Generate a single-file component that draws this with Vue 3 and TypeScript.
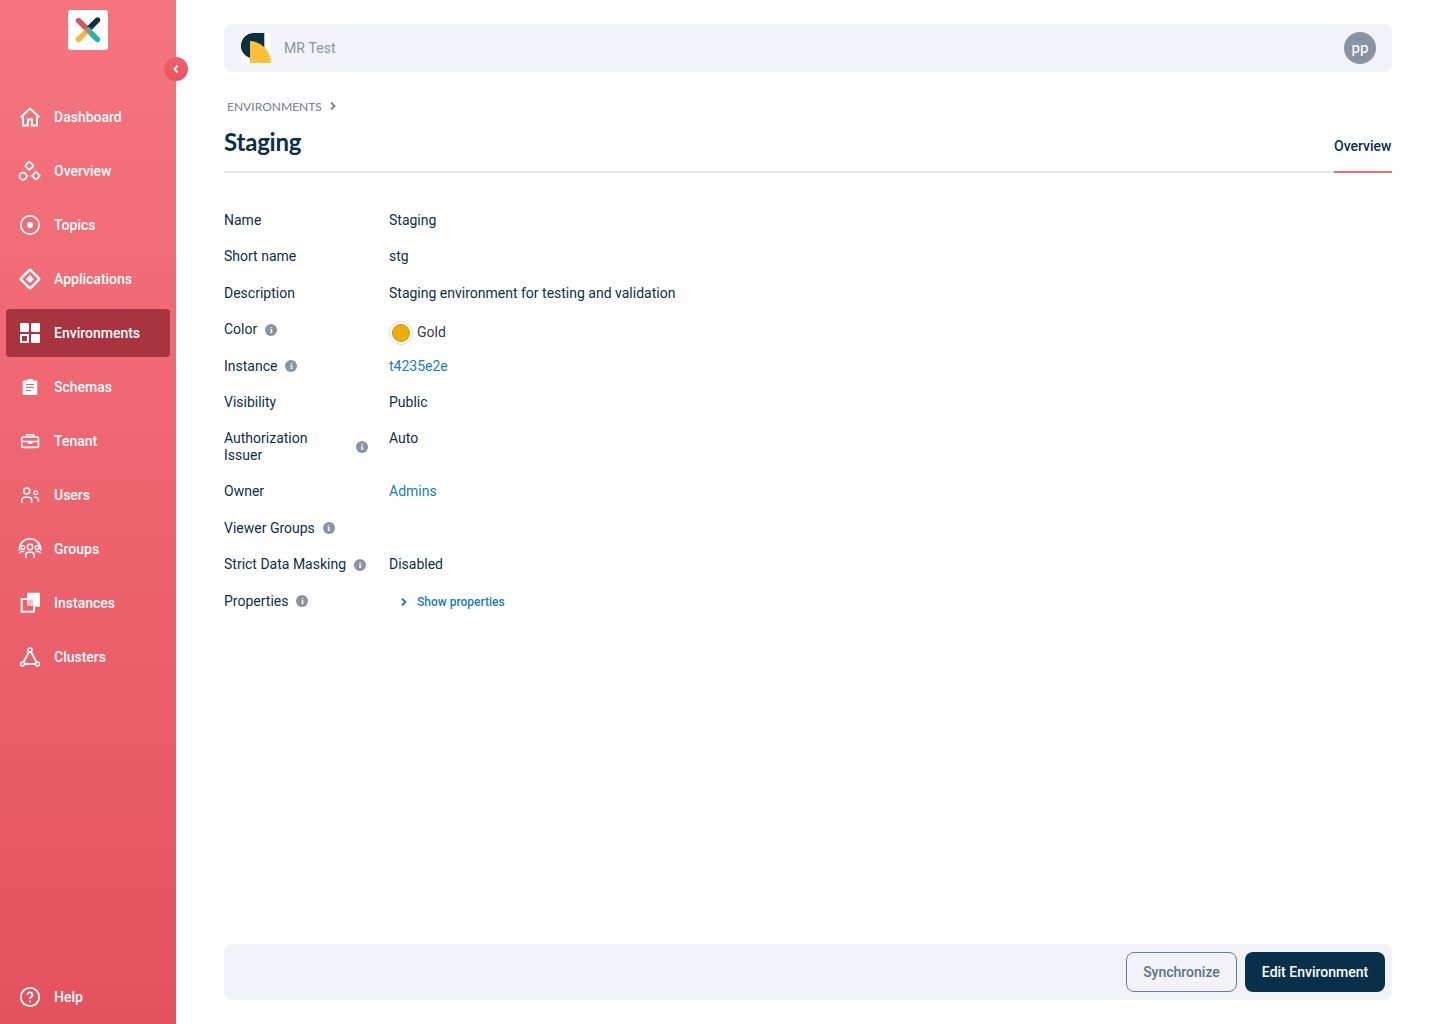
<script setup lang="ts">
interface NavItem { label: string; icon: string; active?: boolean }
const nav: NavItem[] = [
  { label: 'Dashboard', icon: 'home' },
  { label: 'Overview', icon: 'overview' },
  { label: 'Topics', icon: 'topics' },
  { label: 'Applications', icon: 'apps' },
  { label: 'Environments', icon: 'envs', active: true },
  { label: 'Schemas', icon: 'schemas' },
  { label: 'Tenant', icon: 'tenant' },
  { label: 'Users', icon: 'users' },
  { label: 'Groups', icon: 'groups' },
  { label: 'Instances', icon: 'instances' },
  { label: 'Clusters', icon: 'clusters' },
]
</script>

<template>
  <div class="page">
    <aside class="sidebar">
      <div class="logo">
        <svg width="40" height="40" viewBox="0 0 40 40">
          <path d="M10.5 10.5 L19 19" stroke="#d9545f" stroke-width="5.4" stroke-linecap="round" />
          <path d="M29.5 10 L21 18.5" stroke="#0a3048" stroke-width="5.4" stroke-linecap="round" />
          <path d="M29.5 29.5 L21 21" stroke="#20b5a5" stroke-width="5.4" stroke-linecap="round" />
          <path d="M10.5 29.5 L19 21" stroke="#f5b942" stroke-width="5.4" stroke-linecap="round" />
          <circle cx="20" cy="20" r="3" fill="#9a9088" />
        </svg>
      </div>
      <button class="collapse" type="button" aria-label="Collapse">
        <svg width="10" height="12" viewBox="0 0 10 12"><path d="M6.6 2.6 L3.6 6 L6.6 9.4" fill="none" stroke="#fff" stroke-width="2" /></svg>
      </button>
      <nav class="nav">
        <a v-for="item in nav" :key="item.label" class="nav-item" :class="{ active: item.active }">
          <svg class="nav-icon" width="24" height="24" viewBox="0 0 24 24" fill="none" stroke="#fff" stroke-width="1.7">
            <template v-if="item.icon === 'home'">
              <path d="M2.7 12.2 L12 3.6 L21.3 12.2 M5 10.5 V20.5 H10 V14.5 H14 V20.5 H19 V10.5" stroke-width="2" />
            </template>
            <template v-else-if="item.icon === 'overview'">
              <rect x="8.3" y="3.7" width="6" height="6" rx="0.5" transform="rotate(45 11.3 6.7)" />
              <circle cx="5" cy="17.2" r="3.5" />
              <rect x="15.2" y="13.9" width="5.6" height="5.6" rx="0.5" transform="rotate(45 18 16.7)" />
              <path d="M9 17 H14 M14.5 8 L16.5 12" stroke-width="0.7" stroke-dasharray="1.5 1" />
            </template>
            <template v-else-if="item.icon === 'topics'">
              <circle cx="12" cy="12" r="9.2" />
              <circle cx="12" cy="12" r="3" fill="#fff" stroke="none" />
            </template>
            <template v-else-if="item.icon === 'apps'">
              <rect x="5.2" y="5.2" width="13.6" height="13.6" rx="1" transform="rotate(45 12 12)" stroke-width="2.4" />
              <rect x="9.2" y="9.2" width="5.6" height="5.6" transform="rotate(45 12 12)" fill="#fff" stroke="none" />
            </template>
            <template v-else-if="item.icon === 'envs'">
              <rect x="2" y="2" width="9" height="9" rx="1.2" fill="#fff" stroke="none" />
              <rect x="13" y="2" width="9" height="9" rx="1.2" fill="#fff" stroke="none" />
              <rect x="3" y="14" width="7" height="7" stroke-width="2" />
              <rect x="13" y="13" width="9" height="9" rx="1.2" fill="#fff" stroke="none" />
            </template>
            <template v-else-if="item.icon === 'schemas'">
              <path d="M9.2 5.5 V5 A1 1 0 0 1 10.2 4 H13.8 A1 1 0 0 1 14.8 5 V5.5 H18 A1.3 1.3 0 0 1 19.3 6.8 V18.7 A1.3 1.3 0 0 1 18 20 H6 A1.3 1.3 0 0 1 4.7 18.7 V6.8 A1.3 1.3 0 0 1 6 5.5 Z" fill="#fff" stroke="none" />
              <path d="M8 9.5 H16 M8 12.5 H16 M8 15.5 H13" stroke="#f0686f" stroke-width="1.2" />
            </template>
            <template v-else-if="item.icon === 'tenant'">
              <rect x="3.7" y="8" width="16.8" height="10.4" rx="1.5" stroke-width="1.6" />
              <path d="M8.5 8 V5.8 H15.7 V8 M3.7 12.5 H20.5 M10.5 12.5 V14 H13.7 V12.5" stroke-width="1.6" />
            </template>
            <template v-else-if="item.icon === 'users'">
              <circle cx="8.7" cy="8" r="3" stroke-width="1.5" />
              <circle cx="17.7" cy="9.7" r="1.9" stroke-width="1.2" />
              <path d="M3.7 20 V17.5 A3.2 3.2 0 0 1 6.9 14.3 H10.5 A3.2 3.2 0 0 1 13.7 17.5 V20 M16 14.3 H17.5 A3 3 0 0 1 20.5 17.3 V18.7" stroke-width="1.5" />
            </template>
            <template v-else-if="item.icon === 'groups'">
              <path d="M1.3 13.5 V12.5 A10.7 10.7 0 0 1 22.7 12.5 V13.5" stroke-width="1.6" />
              <circle cx="12" cy="10" r="2.7" stroke-width="1.5" />
              <circle cx="4.8" cy="10.5" r="1.9" stroke-width="1.3" />
              <circle cx="19.2" cy="10.5" r="1.9" stroke-width="1.3" />
              <path d="M7.8 21 V18 A2.8 2.8 0 0 1 10.6 15.2 H13.4 A2.8 2.8 0 0 1 16.2 18 V21 M1.5 16.5 A2.5 2.5 0 0 1 4 14.5 H6.5 M22.5 16.5 A2.5 2.5 0 0 0 20 14.5 H17.5" stroke-width="1.5" />
            </template>
            <template v-else-if="item.icon === 'instances'">
              <path d="M9 1.7 H22 V15.7 H17 V7 H9 Z" fill="#fff" stroke="none" />
              <rect x="3.7" y="8" width="12.3" height="12.7" stroke-width="2" />
              <rect x="9" y="9" width="6" height="6" fill="#fff" fill-opacity=".6" stroke="none" />
            </template>
            <template v-else-if="item.icon === 'clusters'">
              <path d="M12 5 L4.5 19 H19.5 Z" stroke-width="2" />
              <circle cx="12" cy="5" r="2" fill="#f0686f" stroke-width="1.6" />
              <circle cx="4.5" cy="19" r="2" fill="#f0686f" stroke-width="1.6" />
              <circle cx="19.5" cy="19" r="2" fill="#f0686f" stroke-width="1.6" />
            </template>
          </svg>
          <span>{{ item.label }}</span>
        </a>
      </nav>
      <a class="nav-item help">
        <svg class="nav-icon" width="24" height="24" viewBox="0 0 24 24" fill="none" stroke="#fff">
          <circle cx="12" cy="12" r="9.2" stroke-width="1.8" />
          <path d="M9.6 9.8 A2.4 2.4 0 1 1 13 12 C12.2 12.5 12 13 12 14" stroke-width="1.8" />
          <circle cx="12" cy="16.6" r="1.1" fill="#fff" stroke="none" />
        </svg>
        <span>Help</span>
      </a>
    </aside>

    <main class="main">
      <header class="topbar">
        <div class="org-logo">
          <svg width="30" height="30" viewBox="0 0 30 30">
            <rect width="30" height="30" rx="2" fill="#fff" />
            <path d="M23.3 0 H12.7 A12.7 12.7 0 0 0 9 24.9 V16 H23.3 Z" fill="#0a3048" />
            <path d="M9 8 C21 8 30 19 30 30 H9 Z" fill="#fcbf36" />
          </svg>
        </div>
        <span class="org-name">MR Test</span>
        <span class="avatar">pp</span>
      </header>

      <div class="breadcrumb">
        <span>ENVIRONMENTS</span>
        <svg width="8" height="10" viewBox="0 0 8 10"><path d="M2 1.5 L5.5 5 L2 8.5" fill="none" stroke="#7d8896" stroke-width="2" /></svg>
      </div>

      <div class="title-row">
        <h1>Staging</h1>
        <div class="tab">Overview</div>
      </div>

      <dl class="details">
        <dt>Name</dt><dd>Staging</dd>
        <dt>Short name</dt><dd>stg</dd>
        <dt>Description</dt><dd>Staging environment for testing and validation</dd>
        <dt>Color<i class="info">i</i></dt>
        <dd class="color"><span class="swatch"><span class="dot"></span></span>Gold</dd>
        <dt>Instance<i class="info">i</i></dt><dd class="link">t4235e2e</dd>
        <dt>Visibility</dt><dd>Public</dd>
        <dt class="two-line"><span>Authorization Issuer</span><i class="info">i</i></dt><dd>Auto</dd>
        <dt>Owner</dt><dd class="link">Admins</dd>
        <dt>Viewer Groups<i class="info">i</i></dt><dd></dd>
        <dt>Strict Data Masking<i class="info">i</i></dt><dd>Disabled</dd>
        <dt>Properties<i class="info">i</i></dt>
        <dd class="props">
          <svg width="8" height="10" viewBox="0 0 8 10"><path d="M2 1.6 L5.4 5 L2 8.4" fill="none" stroke="#1a7db8" stroke-width="2" /></svg>
          <span>Show properties</span>
        </dd>
      </dl>

      <footer class="footer">
        <button class="btn ghost" type="button">Synchronize</button>
        <button class="btn solid" type="button">Edit Environment</button>
      </footer>
    </main>
  </div>
</template>

<style scoped>
.page {
  display: flex;
  height: 1024px;
  font-family: Roboto, "Liberation Sans", sans-serif;
  color: #0a3048;
  background: #fff;
  overflow: hidden;
}
.sidebar {
  position: relative;
  flex: 0 0 176px;
  display: flex;
  flex-direction: column;
  padding: 10px 6px 3px;
  box-sizing: border-box;
  background: linear-gradient(180deg, #f5757f 0%, #e4525e 100%);
}
.logo {
  align-self: center;
  width: 40px;
  height: 40px;
  background: #fff;
  border-radius: 3px;
}
.collapse {
  position: absolute;
  left: 164px;
  top: 57px;
  width: 24px;
  height: 24px;
  padding: 0;
  border: 0;
  border-radius: 50%;
  background: linear-gradient(180deg, #ee646d, #e7535f);
  display: flex;
  align-items: center;
  justify-content: center;
}
.nav {
  display: flex;
  flex-direction: column;
  gap: 6px;
  margin-top: 43px;
  flex: 1;
}
.nav-item {
  display: flex;
  align-items: center;
  height: 48px;
  padding-left: 12px;
  gap: 12px;
  border-radius: 4px;
  color: #fff;
  font-size: 14px;
  font-weight: 500;
}
.nav-item.active {
  background: #a8343f;
}
.nav-icon {
  flex: none;
}
.main {
  flex: 1;
  min-width: 0;
  display: flex;
  flex-direction: column;
  padding: 24px 48px;
}
.topbar {
  display: flex;
  align-items: center;
  height: 48px;
  padding: 0 16px 0 17px;
  background: #f1f3f8;
  border-radius: 8px;
}
.org-logo {
  width: 30px;
  height: 30px;
}
.org-logo svg {
  display: block;
}
.org-name {
  margin-left: 13px;
  font-size: 14px;
  color: #8a93a5;
  letter-spacing: 0.12px;
}
.avatar {
  margin-left: auto;
  width: 32px;
  height: 32px;
  padding-bottom: 2px;
  box-sizing: border-box;
  border-radius: 50%;
  background: #8a93a5;
  color: #fff;
  font-family: Lato, sans-serif;
  font-size: 15px;
  font-weight: 500;
  display: flex;
  align-items: center;
  justify-content: center;
}
.breadcrumb {
  display: flex;
  align-items: center;
  gap: 7px;
  margin-top: 26px;
  padding-left: 3px;
  height: 16px;
  font-family: Lato, sans-serif;
  font-size: 12px;
  font-weight: 500;
  color: #7d8896;
}
.title-row {
  display: flex;
  justify-content: space-between;
  align-items: stretch;
  height: 48px;
  margin-top: 11px;
  border-bottom: 2px solid #e6e6f2;
  box-sizing: border-box;
}
h1 {
  margin: 2px 0 0;
  font-family: Lato, sans-serif;
  font-size: 24px;
  font-weight: 700;
  line-height: 30px;
  letter-spacing: -0.2px;
  color: #0a3048;
}
.tab {
  align-self: flex-end;
  height: 36px;
  margin-bottom: -2px;
  border-bottom: 2px solid #f06a78;
  font-size: 14px;
  font-weight: 500;
  line-height: 18px;
  box-sizing: border-box;
  width: 58px;
  white-space: nowrap;
}
.details {
  display: grid;
  grid-template-columns: 144px 1fr;
  column-gap: 21px;
  row-gap: 19.4px;
  margin: 39px 0 0;
  font-size: 14px;
  line-height: 17px;
}
dt {
  display: flex;
  align-items: center;
  gap: 8px;
}
.two-line {
  line-height: 16.8px;
}
dd {
  margin: 0;
}
.info {
  flex: none;
  width: 12px;
  height: 12px;
  border-radius: 50%;
  background: #8a93a5;
  color: #fff;
  font-family: "Liberation Serif", serif;
  font-style: normal;
  font-weight: 700;
  font-size: 9px;
  line-height: 12px;
  text-align: center;
}
.color {
  display: flex;
  align-items: center;
  gap: 4px;
  height: 17px;
  margin-top: 3px;
  margin-bottom: -3px;
  color: #333c46;
}
.swatch {
  flex: none;
  width: 24px;
  height: 24px;
  margin-top: 1px;
  box-sizing: border-box;
  border: 1px solid #d8dbe2;
  border-radius: 50%;
  display: flex;
  align-items: center;
  justify-content: center;
}
.dot {
  width: 18px;
  height: 18px;
  box-sizing: border-box;
  border-radius: 50%;
  background: #ecaf07;
  border: 1px solid #c8940a;
}
.link {
  color: #1a7db8;
}
.props {
  display: flex;
  align-items: center;
  padding-left: 11px;
  gap: 9px;
  margin-top: 1px;
  margin-bottom: -1px;
  color: #1a7db8;
  font-size: 12px;
  font-weight: 500;
}
.footer {
  margin-top: auto;
  height: 56px;
  box-sizing: border-box;
  padding: 0 7px;
  display: flex;
  align-items: center;
  justify-content: flex-end;
  gap: 8px;
  background: #f1f3f8;
  border-radius: 8px;
}
.btn {
  height: 40px;
  border-radius: 8px;
  font-family: Roboto, sans-serif;
  font-size: 14px;
  font-weight: 500;
  box-sizing: border-box;
}
.ghost {
  width: 111px;
  background: transparent;
  border: 1px solid #5f7f99;
  color: #5f7284;
}
.solid {
  width: 140px;
  background: #09304a;
  border: 0;
  color: #fff;
}
</style>
